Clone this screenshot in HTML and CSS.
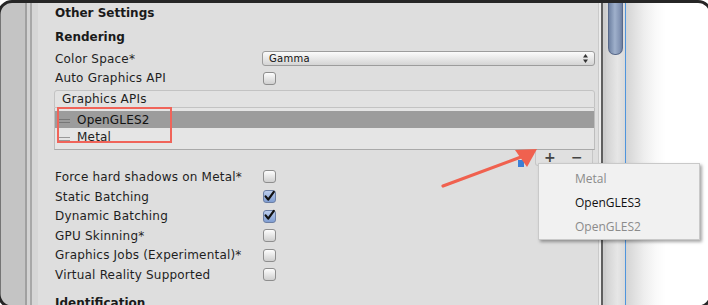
FILE: index.html
```html
<!DOCTYPE html>
<html>
<head>
<meta charset="utf-8">
<link rel="stylesheet" href="styles.css">
</head>
<body>
<div class="stage">
<div class="frame">
  <div class="gutter"></div>
  <div class="ldivider"></div>
  <div class="panel">
    <div class="title">Other Settings</div>
    <div class="subtitle">Rendering</div>
    <div class="row"><span class="label">Color Space*</span>
      <div class="dropdown"><span>Gamma</span>
        <svg class="updown" width="5" height="9" viewBox="0 0 5 9"><polygon points="0,3.5 2.5,0 5,3.5" fill="#333"/><polygon points="0,5.5 2.5,9 5,5.5" fill="#333"/></svg>
      </div>
    </div>
    <div class="row"><span class="label">Auto Graphics API</span><span class="cb"></span></div>
    <div class="list">
      <div class="list-head">Graphics APIs</div>
      <div class="list-body">
        <div class="item sel"><span class="handle"></span>OpenGLES2</div>
        <div class="item"><span class="handle"></span>Metal</div>
      </div>
    </div>
    <div class="list-foot"><span class="pm">+</span><span class="pm">−</span></div>
    <div class="rows">
      <div class="row"><span class="label">Force hard shadows on Metal*</span><span class="cb"></span></div>
      <div class="row"><span class="label">Static Batching</span><span class="cb on"><svg width="13" height="13" viewBox="0 0 13 13"><path d="M2.6 6.4 L5.2 9.6 L10.8 1.8" fill="none" stroke="#111" stroke-width="2.2" stroke-linecap="round" stroke-linejoin="round"/></svg></span></div>
      <div class="row"><span class="label">Dynamic Batching</span><span class="cb on"><svg width="13" height="13" viewBox="0 0 13 13"><path d="M2.6 6.4 L5.2 9.6 L10.8 1.8" fill="none" stroke="#111" stroke-width="2.2" stroke-linecap="round" stroke-linejoin="round"/></svg></span></div>
      <div class="row"><span class="label">GPU Skinning*</span><span class="cb"></span></div>
      <div class="row"><span class="label">Graphics Jobs (Experimental)*</span><span class="cb"></span></div>
      <div class="row"><span class="label">Virtual Reality Supported</span><span class="cb"></span></div>
    </div>
    <div class="title ident">Identification</div>
  </div>
  <div class="rdivider"></div>
  <div class="track"><div class="thumb"></div></div>
  <div class="blueline"></div>
  <div class="shade"></div>
</div>

<div class="redbox"></div>
<div class="bluemark"></div>
<svg class="overlay" width="708" height="305" viewBox="0 0 708 305">
  <line x1="443" y1="186" x2="521" y2="157" stroke="#f0614f" stroke-width="3.2" stroke-linecap="round"/>
  <polygon points="537,149 515,150 527,167" fill="#f0614f"/>
</svg>
<div class="popup">
  <div class="pitem dis">Metal</div>
  <div class="pitem">OpenGLES3</div>
  <div class="pitem dis">OpenGLES2</div>
</div>
<svg class="overlay" width="708" height="305" viewBox="0 0 708 305">
  <path fill="#ffffff" fill-rule="evenodd" d="M-10,-10 H720 V320 H-10 Z M12,1.5 H698 A13,13 0 0 1 711,14.5 V294 A13,13 0 0 1 698,307 H12 A13,13 0 0 1 -1,294 V14.5 A13,13 0 0 1 12,1.5 Z"/>
  <path fill="none" stroke="#262626" stroke-width="3" d="M12,1.5 H698 A13,13 0 0 1 711,14.5 V294 A13,13 0 0 1 698,307 H12 A13,13 0 0 1 -1,294 V14.5 A13,13 0 0 1 12,1.5 Z"/>
</svg>
</div>
</body>
</html>
```
FILE: styles.css
```css
body {
  margin: 0;
  padding: 0;
  background: #ffffff;
  font-family: "DejaVu Sans", sans-serif;
}
.stage {
  position: relative;
  width: 708px;
  height: 305px;
  overflow: hidden;
}
.frame {
  box-sizing: border-box;
  width: 708px;
  height: 305px;
  padding-top: 3px;
  display: flex;
  background: #dedede;
}
.frame > * { flex: none; }
.gutter {
  width: 25px;
  background: #c4c4c4;
}
.ldivider {
  width: 13px;
  background: linear-gradient(to right, #a0a0a0 0 2px, #d3d3d3 2px 5px, #a8a8a8 5px 7px, #d6d6d6 7px 13px);
}
.panel {
  box-sizing: border-box;
  width: 560px;
  padding: 0 3px 0 17px;
  background: #dedede;
  display: flex;
  flex-direction: column;
  color: #1e1e1e;
  font-size: 12px;
  letter-spacing: 0.2px;
  overflow: hidden;
}
.panel > * { flex: none; }
.title {
  height: 20px;
  line-height: 20px;
  font-weight: bold;
  letter-spacing: 0;
  color: #1a1a1a;
}
.subtitle {
  margin-top: 4px;
  height: 20px;
  line-height: 20px;
  font-weight: bold;
  letter-spacing: 0;
  color: #1a1a1a;
}
.row {
  height: 19.6px;
  display: flex;
  align-items: center;
}
.subtitle + .row { margin-top: 2px; }
.label {
  width: 208px;
  flex: none;
  white-space: nowrap;
}
.dropdown {
  box-sizing: border-box;
  width: 333px;
  height: 15px;
  margin-left: -1px;
  border: 1px solid #9c9c9c;
  border-radius: 3px;
  background: linear-gradient(#fbfbfb, #d4d4d4);
  display: flex;
  align-items: center;
  justify-content: space-between;
  padding: 0 6px 0 6px;
  font-size: 10px;
  letter-spacing: 0.3px;
  color: #111;
}
.updown { display: block; }
.cb {
  box-sizing: border-box;
  width: 13px;
  height: 13px;
  border: 1px solid #8e8e8e;
  border-radius: 3px;
  background: linear-gradient(#fdfdfd, #cfcfcf);
  display: flex;
  align-items: center;
  justify-content: center;
}
.cb.on {
  border-color: #6c7fa4;
  background: linear-gradient(#bccdec, #809ed2);
  overflow: visible;
}
.cb svg { display: block; flex: none; margin-top: -1px; }
.list {
  margin: 1.8px 0 0 -1px;
}
.list-head {
  box-sizing: border-box;
  height: 18px;
  border: 1px solid #c3c3c3;
  border-radius: 3px 3px 0 0;
  background: #e2e2e2;
  padding-left: 7px;
  line-height: 16px;
}
.list-body {
  box-sizing: border-box;
  padding: 3px 0;
  border: 1px solid #bdbdbd;
  border-top: none;
  border-bottom-color: #a9a9a9;
  background: #e5e5e5;
}
.item {
  height: 17.5px;
  display: flex;
  align-items: center;
  padding-left: 3px;
}
.item + .item { height: 18px; }
.item.sel { background: #9c9c9c; color: #111; }
.handle {
  box-sizing: border-box;
  width: 12px;
  height: 4px;
  border-top: 1px solid #999;
  border-bottom: 1px solid #999;
  margin-right: 7px;
  margin-top: 3px;
}
.item.sel .handle { border-color: #777; }
.list-foot {
  align-self: flex-end;
  box-sizing: border-box;
  width: 58px;
  height: 16px;
  margin-right: 2px;
  border: 1px solid #c6c6c6;
  border-top: none;
  border-radius: 0 0 3px 3px;
  background: #e0e0e0;
  display: flex;
  padding-left: 5px;
  gap: 9px;
}
.pm {
  width: 18px;
  text-align: center;
  font-size: 14px;
  font-weight: bold;
  line-height: 15px;
  color: #444;
}
.rows { margin-top: 0.7px; }
.ident { margin-top: 8px; }
.rdivider {
  width: 8px;
  background: linear-gradient(to right, #cacaca 0 1px, #ececec 1px 3px, #5f5f5f 3px 5px, #cdcdcd 5px 8px);
}
.track {
  width: 19px;
  padding-left: 2px;
  box-sizing: border-box;
  background: linear-gradient(to right, #d2d2d2, #e6e6e6 60%, #dadada);
}
.thumb {
  box-sizing: border-box;
  width: 15px;
  height: 52px;
  border: 1px solid #58698a;
  border-top: none;
  border-radius: 0 0 7px 7px;
  background: linear-gradient(to right, #6f82a3, #9fb0cb 45%, #8596b5 80%, #6d7fa0);
}
.blueline {
  width: 1px;
  background: #4f95dd;
}
.frame > .shade {
  flex: 1;
  background: linear-gradient(to right, #d4d4d4, #eeeeee 18px, #fafafa 30px, #ffffff 40px);
}
.redbox {
  position: absolute;
  left: 57px;
  top: 107px;
  width: 111px;
  height: 32px;
  border: 2px solid #f0645a;
}
.bluemark {
  position: absolute;
  left: 518px;
  top: 160px;
  width: 6px;
  height: 7px;
  background: #3b7fd6;
}
.overlay {
  position: absolute;
  left: 0;
  top: 0;
  pointer-events: none;
}
.popup {
  position: absolute;
  left: 538px;
  top: 163px;
  box-sizing: border-box;
  width: 162px;
  height: 77px;
  padding-top: 3px;
  border: 1px solid #c9c9c9;
  background: #f1f1f1;
  box-shadow: 2px 2px 3px rgba(0, 0, 0, 0.35);
  font-family: "Open Sans", "Noto Sans", sans-serif;
  font-size: 12px;
}
.pitem {
  height: 24px;
  line-height: 24px;
  padding-left: 36px;
  color: #111;
}
.pitem.dis { color: #8b8b8b; }
```
